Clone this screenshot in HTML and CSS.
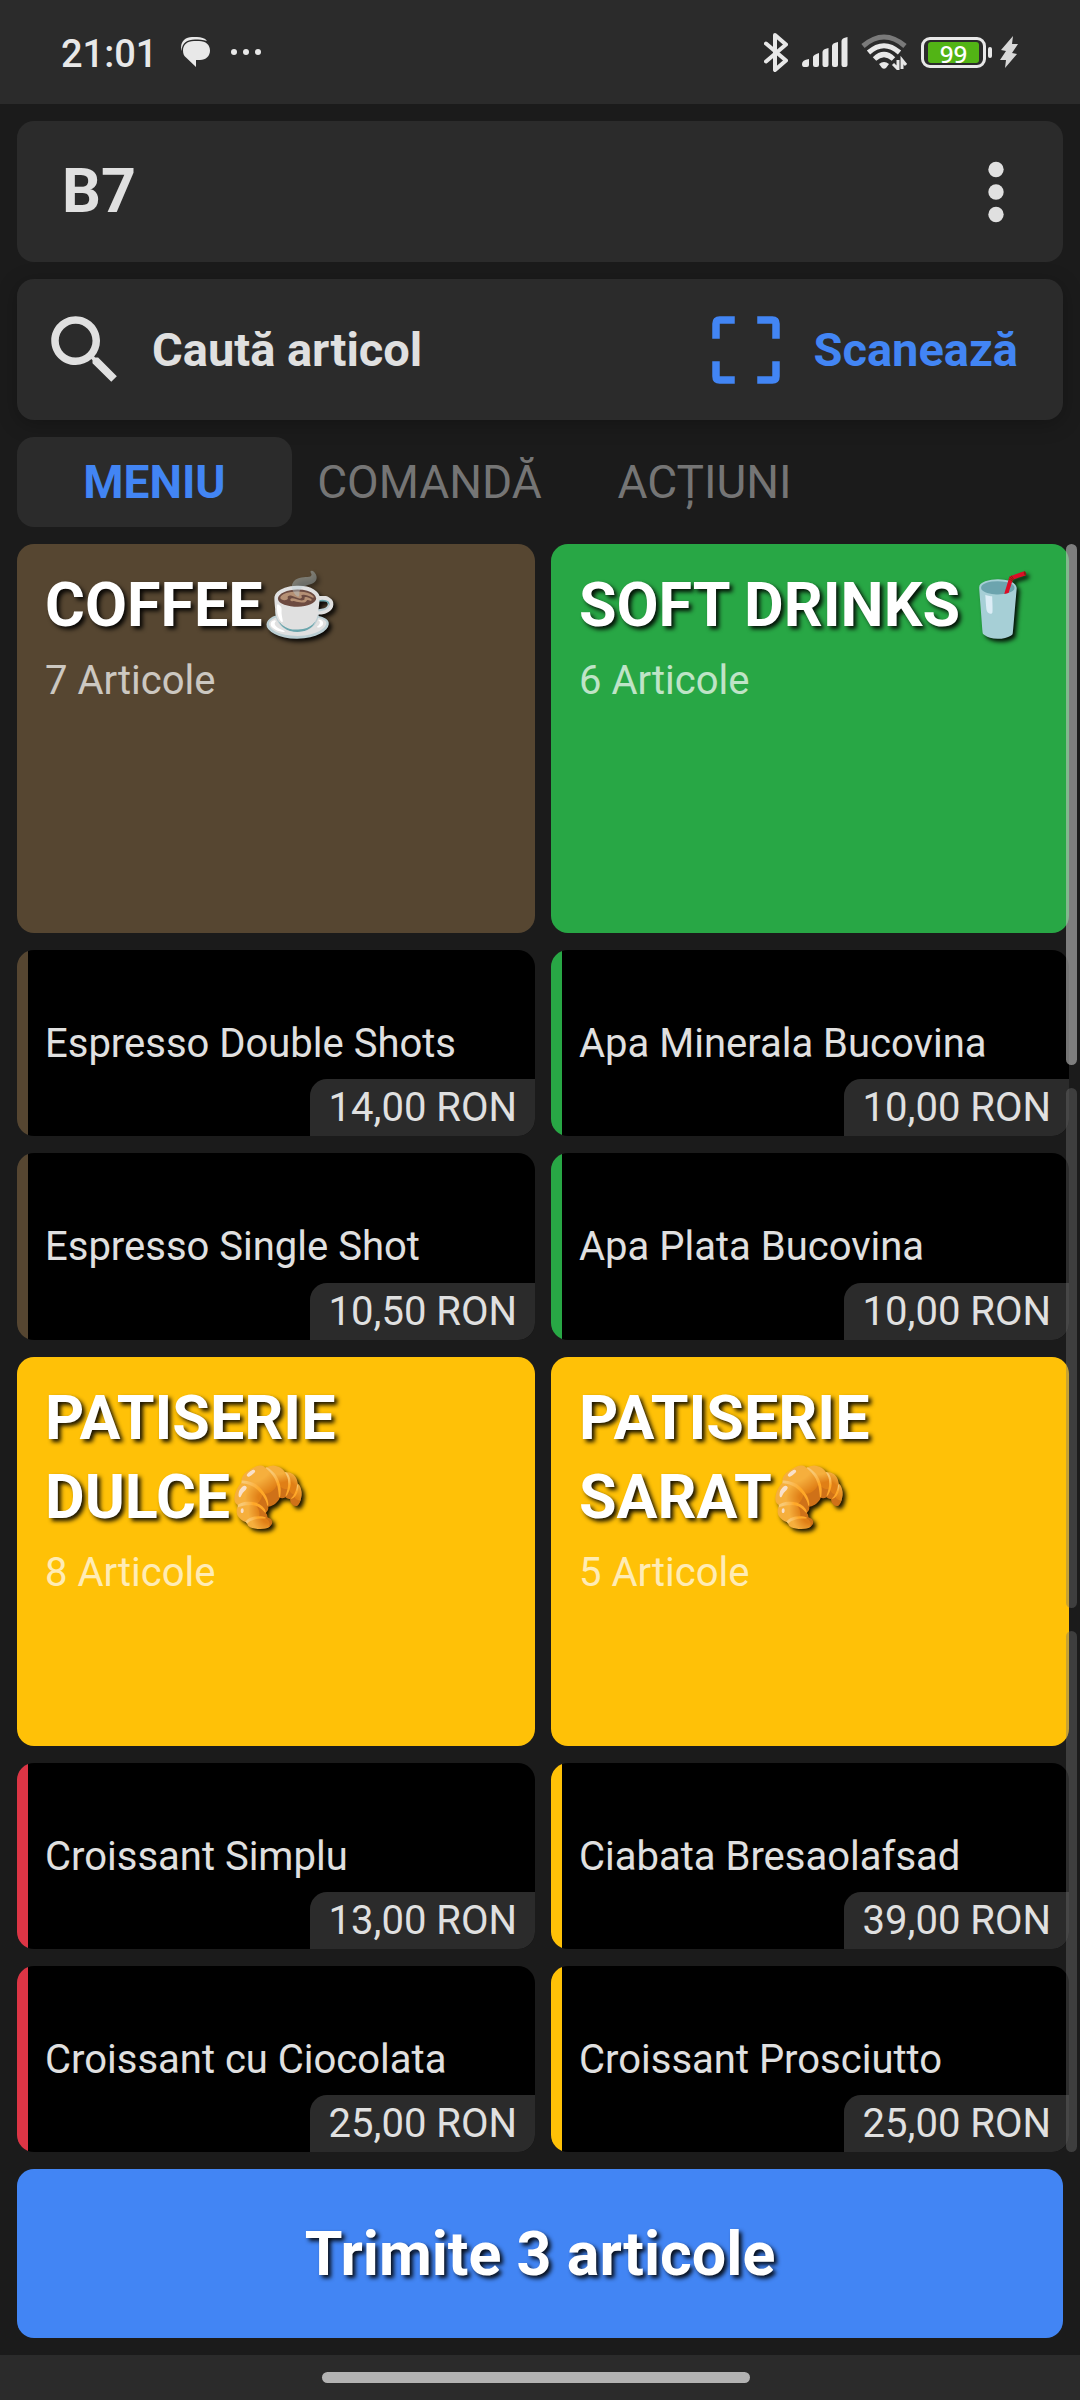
FILE: index.html
```html
<!DOCTYPE html>
<html lang="ro">
<head>
<meta charset="utf-8">
<meta name="viewport" content="width=device-width, initial-scale=1">
<title>B7</title>
<link rel="stylesheet" href="styles.css">
</head>
<body>
<div class="app">
  <div class="status">
    <div class="status-side">
      <span class="clock">21:01</span>
      <svg class="chat" width="30" height="30" viewBox="0 0 30 30" fill="#e8e8e8" aria-hidden="true"><path d="M.5 14C-1.500 5 4 0 11 0h5c4 0 8 1 10 4C22 2.500 18 2.500 14 2.500 6 2.500 1 6 .5 14z"/><path d="M13 4h5c7 0 11 4 11 9.500S25 23 19 23h-4v7L5 20.500C3 19 2 17 2 13.500 2 8 6 4 13 4z"/></svg>
      <svg class="more" width="32" height="8" viewBox="0 0 32 8" fill="#e8e8e8" aria-hidden="true"><circle cx="4" cy="4" r="3"/><circle cx="16" cy="4" r="3"/><circle cx="28" cy="4" r="3"/></svg>
    </div>
    <div class="status-side">
      <svg width="24" height="39" viewBox="0 0 24 39" fill="none" stroke="#e8e8e8" stroke-width="4" stroke-linecap="round" stroke-linejoin="round" aria-hidden="true"><path d="M2 10.500l20 17-11 9.500V2l11 9.500-20 17"/></svg>
      <svg class="signal" width="46" height="30" viewBox="0 0 46 30" fill="#e8e8e8" aria-hidden="true"><path d="M0 27q0-4 7-5v6q0 2-2 2H2q-2 0-2-3zM11 20q0-2 6-4v12q0 2-2 2h-2q-2 0-2-2zM20.500 15q0-3 6-4v17q0 2-2 2h-2q-2 0-2-2zM30 9q0-3 6-4v23q0 2-2 2h-2q-2 0-2-2zM39.500 4q0-3 6-4v28q0 2-2 2h-2q-2 0-2-2z"/></svg>
      <svg class="wifi" width="48" height="36" viewBox="0 0 48 36" fill="none" aria-hidden="true"><path d="M3 12Q24-6 45 12" stroke="#7a7a7a" stroke-width="5"/><path d="M8.500 18.500Q24 5 39.500 18.500M14.500 25Q24 16 33.500 25" stroke="#e8e8e8" stroke-width="5"/><path d="M19 30q5-4 10 0l-3 4q-2 1.500-4 0z" fill="#e8e8e8"/><path d="M38 26v9l-5-5M42 35v-9l4 5" stroke="#e8e8e8" stroke-width="3"/></svg>
      <div class="battery"><span class="charge">99</span></div>
      <svg class="bolt" width="18" height="32" viewBox="0 0 18 32" fill="#d8d8d8" aria-hidden="true"><path d="M13 0L1 14l5 1-6 9h6L5 32 17 18l-5-1 6-9h-6z"/></svg>
    </div>
  </div>

  <header class="bar title-bar">
    <h1 class="table-name">B7</h1>
    <button class="icon-button" aria-label="Mai multe">
      <svg width="90" height="90" viewBox="0 0 24 24" fill="currentColor"><circle cx="12" cy="6" r="2.050"/><circle cx="12" cy="12" r="2.050"/><circle cx="12" cy="18" r="2.050"/></svg>
    </button>
  </header>

  <div class="bar search-bar">
    <button class="action">
      <svg width="90" height="90" viewBox="0 0 24 24" fill="currentColor" aria-hidden="true"><path d="M15.500 14h-.79l-.28-.27C15.410 12.590 16 11.110 16 9.500 16 5.910 13.090 3 9.500 3S3 5.910 3 9.500 5.910 16 9.500 16c1.610 0 3.090-.59 4.230-1.570l.27.28v.79l5 4.990L20.490 19l-4.990-5zm-6 0C7.010 14 5 11.990 5 9.500S7.010 5 9.500 5 14 7.010 14 9.500 11.990 14 9.500 14z"/></svg>
      <span>Caută articol</span>
    </button>
    <button class="action scan">
      <svg width="90" height="90" viewBox="0 0 24 24" fill="currentColor" aria-hidden="true"><path d="M5 3h4v2H5v4H3V5q0-2 2-2zM15 3h4q2 0 2 2v4h-2V5h-4zM3 15h2v4h4v2H5q-2 0-2-2zM19 15h2v4q0 2-2 2h-4v-2h4z"/></svg>
      <span>Scanează</span>
    </button>
  </div>

  <nav class="tabs">
    <button class="tab active">MENIU</button>
    <button class="tab">COMANDĂ</button>
    <button class="tab">ACȚIUNI</button>
  </nav>

  <main class="menu">
    <div class="grid">
      <button class="category brown"><span class="name">COFFEE☕</span><span class="count">7 Articole</span></button>
      <button class="category green"><span class="name">SOFT DRINKS🥤</span><span class="count">6 Articole</span></button>
      <button class="item brown"><span class="label">Espresso Double Shots</span><span class="price">14,00 RON</span></button>
      <button class="item green"><span class="label">Apa Minerala Bucovina</span><span class="price">10,00 RON</span></button>
      <button class="item brown"><span class="label">Espresso Single Shot</span><span class="price">10,50 RON</span></button>
      <button class="item green"><span class="label">Apa Plata Bucovina</span><span class="price">10,00 RON</span></button>
      <button class="category yellow"><span class="name">PATISERIE DULCE🥐</span><span class="count">8 Articole</span></button>
      <button class="category yellow"><span class="name">PATISERIE SARAT🥐</span><span class="count">5 Articole</span></button>
      <button class="item red"><span class="label">Croissant Simplu</span><span class="price">13,00 RON</span></button>
      <button class="item yellow"><span class="label">Ciabata Bresaolafsad</span><span class="price">39,00 RON</span></button>
      <button class="item red"><span class="label">Croissant cu Ciocolata</span><span class="price">25,00 RON</span></button>
      <button class="item yellow"><span class="label">Croissant Prosciutto</span><span class="price">25,00 RON</span></button>
    </div>
    <div class="pages" aria-hidden="true"><i class="page current"></i><i class="page"></i><i class="page"></i></div>
  </main>

  <button class="submit">Trimite 3 articole</button>
  <div class="home"><div class="handle"></div></div>
</div>
</body>
</html>
```
FILE: styles.css
```css
* { box-sizing: border-box; }

body {
  margin: 0;
  background: #1b1b1b;
  color: #e0e0e0;
  font-family: Roboto, "Noto Color Emoji", sans-serif;
  font-size: 40px;
  line-height: 50px;
}

button {
  margin: 0;
  padding: 0;
  border: 0;
  background: none;
  color: inherit;
  font: inherit;
  text-align: left;
}

svg { display: block; flex: none; }

.app {
  display: flex;
  flex-direction: column;
  min-height: 100vh;
}

/* System status bar */
.status {
  display: flex;
  justify-content: space-between;
  height: 104px;
  padding: 0 62px 0 61px;
  background: #2b2b2b;
  color: #e8e8e8;
}
.status-side { display: flex; align-items: center; }
.clock { padding-top: 4px; font-size: 38px; font-weight: 500; }
.chat { margin-left: 24px; }
.more { margin-left: 19px; }
.signal { margin-left: 14px; }
.wifi { margin-left: 12px; }
.bolt { margin-left: 14px; }
.battery {
  position: relative;
  width: 65px;
  height: 31px;
  margin-left: 13px;
  padding: 2px 4px;
  border: 3px solid #e8e8e8;
  border-radius: 9px;
}
.battery::after {
  content: "";
  position: absolute;
  top: 7px;
  right: -9px;
  width: 4px;
  height: 11px;
  border-radius: 2px;
  background: #e8e8e8;
}
.charge {
  display: block;
  height: 21px;
  border-radius: 3px;
  background: #52b415;
  color: #fff;
  font: 500 24px/23px "Noto Sans", sans-serif;
  text-align: center;
}

/* Top cards */
.bar {
  display: flex;
  align-items: center;
  justify-content: space-between;
  height: 141px;
  margin: 17px 17px 0;
  border-radius: 17px;
  background: #2b2b2b;
}
.title-bar { padding: 0 22px 0 45px; }
.table-name { margin: 0; font-size: 61px; line-height: 79px; }
.search-bar { padding: 0 45px 0 23px; box-shadow: 0 4px 20px rgba(0, 0, 0, .25); }
.action {
  display: flex;
  align-items: center;
  gap: 22px;
  font-size: 47px;
  font-weight: 700;
}
.scan { color: #4285f4; }

/* Tabs */
.tabs {
  display: flex;
  margin: 17px 17px 0;
}
.tab {
  width: 275px;
  height: 90px;
  border-radius: 17px;
  color: #757575;
  font-size: 46px;
  text-align: center;
}
.tab.active { background: #2b2b2b; color: #4285f4; font-weight: 700; }

/* Menu grid */
.menu {
  position: relative;
  display: flex;
  flex: 1;
  margin-top: 17px;
  padding: 0 11px 0 17px;
}
.grid {
  display: grid;
  flex: 1;
  grid-template-columns: 1fr 1fr;
  grid-template-rows: repeat(8, minmax(186px, 1fr));
  gap: 17px 16px;
}

.brown { --accent: #564631; }
.green { --accent: #28a745; }
.yellow { --accent: #ffc107; }
.red { --accent: #dc3545; }

.category {
  display: flex;
  flex-direction: column;
  grid-row: span 2;
  gap: 11px;
  padding: 22px 17px 22px 28px;
  border-radius: 17px;
  background: var(--accent);
  color: #fff;
}
.name {
  font-size: 61px;
  font-weight: 700;
  line-height: 79px;
  text-shadow: 3px 3px 4px rgba(0, 0, 0, .9);
}
.count { opacity: .7; }

.item {
  display: grid;
  overflow: hidden;
  border-radius: 17px;
  background: linear-gradient(to right, var(--accent) 11px, #000 11px);
}
.label, .price { grid-area: 1 / 1; }
.label { align-self: center; padding: 2px 0 0 28px; }
.price {
  align-self: end;
  justify-self: end;
  min-width: 225px;
  padding: 0 18px;
  border-top-left-radius: 17px;
  background: #2b2b2b;
  line-height: 57px;
  text-align: right;
}

/* Page indicator over the right edge of the grid */
.pages {
  position: absolute;
  inset: 0 3px 0 auto;
  display: flex;
  flex-direction: column;
  gap: 23px;
  width: 11px;
}
.page { flex: 1; border-radius: 6px; background: rgba(115, 115, 115, .4); }
.page.current { background: rgba(194, 194, 194, .6); }

.submit {
  height: 169px;
  margin: 17px;
  border-radius: 17px;
  background: #4285f4;
  color: #fff;
  font-size: 61px;
  font-weight: 700;
  text-align: center;
  text-shadow: 3px 3px 4px rgba(0, 0, 0, .9);
}

.home {
  display: flex;
  align-items: center;
  justify-content: center;
  height: 45px;
  padding-right: 8px;
  background: #2b2b2b;
}
.handle { width: 428px; height: 11px; border-radius: 6px; background: #b3b3b3; }
```
